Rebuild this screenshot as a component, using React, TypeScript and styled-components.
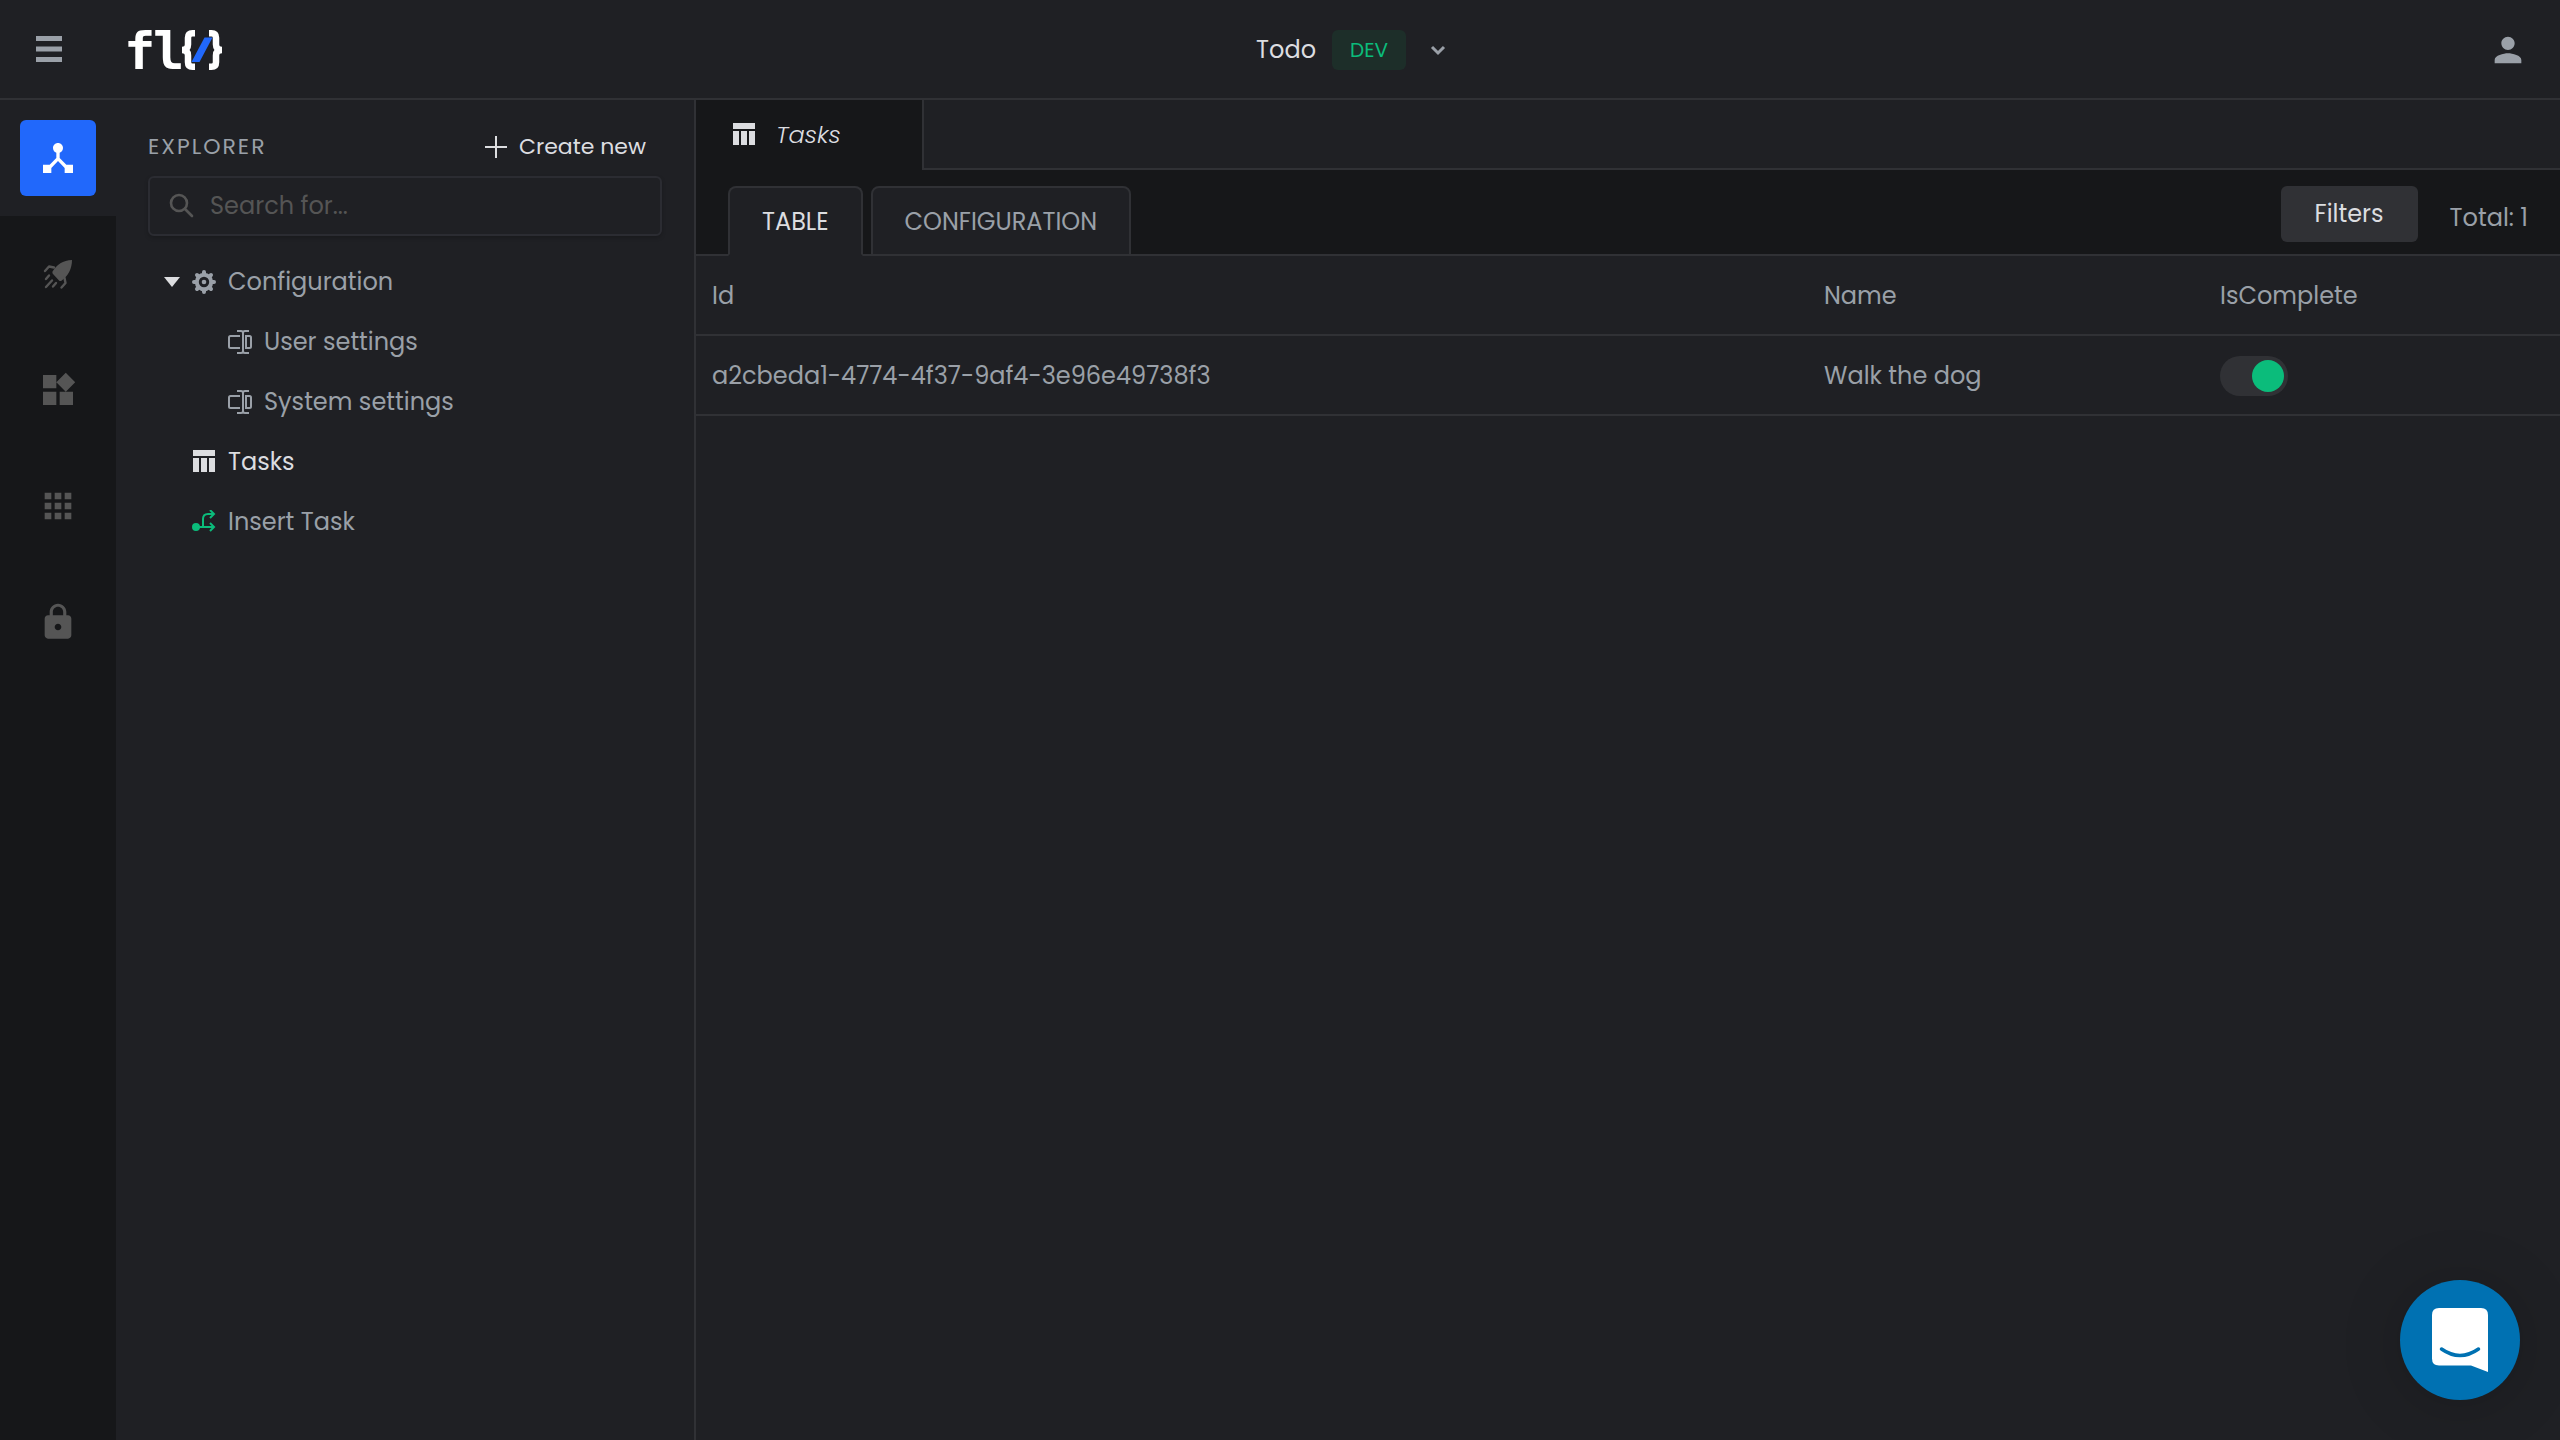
import React from 'react';
import styled, { createGlobalStyle } from 'styled-components';
import { MdDeviceHub, MdWidgets, MdApps, MdLock, MdPerson } from 'react-icons/md';

const color = {
  base: '#1f2024', deep: '#161719', line: '#303135', text: '#9aa0a8',
  bright: '#dcdde0', dim: '#555555', green: '#0bbc7b', blue: '#2168fb',
};

const GlobalStyle = createGlobalStyle`
  * { box-sizing: border-box; }
  body { margin: 0; background: ${color.base}; color: ${color.text}; font-family: Poppins, Inter, sans-serif; font-size: 24px; line-height: 36px; }
  button, input { font: inherit; color: inherit; }
  button { background: none; border: 0; padding: 0; cursor: pointer; }
  svg { display: block; flex: none; }
`;

const Page = styled.div`display: flex; flex-direction: column; min-height: 100vh;`;
const Header = styled.header`
  display: flex; align-items: center; justify-content: space-between;
  height: 100px; padding: 0 32px; box-shadow: inset 0 -2px 0 ${color.line};
`;
const Group = styled.div<{ $gap: number }>`display: flex; align-items: center; gap: ${p => p.$gap}px;`;
const IconButton = styled.button`display: flex; color: ${color.text};`;
const Project = styled.button`display: flex; align-items: center; gap: 16px; padding-right: 2px; color: ${color.bright};`;
const Badge = styled.span`
  padding: 0 18px; border-radius: 6px; background: #1d2e29; color: ${color.green};
  font-size: 20px; line-height: 40px;
`;

const Body = styled.div`display: flex; flex: 1;`;
const Rail = styled.nav`width: 116px; flex: none; background: ${color.deep};`;
const RailItem = styled.button<{ $active?: boolean }>`
  display: flex; width: 100%; padding: 20px; color: ${p => (p.$active ? '#fff' : color.dim)};
  background: ${p => (p.$active ? color.base : 'transparent')};
`;
const RailTile = styled.span<{ $active?: boolean }>`
  display: grid; place-items: center; width: 76px; height: 76px; border-radius: 6px;
  background: ${p => (p.$active ? color.blue : 'transparent')};
`;

const Explorer = styled.aside`width: 580px; flex: none; padding: 24px 32px; border-right: 2px solid ${color.line};`;
const ExplorerHead = styled.div`display: flex; align-items: center; justify-content: space-between; height: 46px; padding-right: 16px;`;
const Title = styled.h2`margin: 0; font-size: 22px; font-weight: 400; letter-spacing: 2px;`;
const CreateButton = styled.button`display: flex; align-items: center; gap: 12px; color: ${color.bright}; font-size: 22px;`;
const Search = styled.label`
  display: flex; align-items: center; gap: 12px; height: 60px; margin-top: 6px; padding: 0 16px;
  border: 2px solid #2b2c32; border-radius: 6px; color: ${color.dim}; box-shadow: 0 2px 4px rgba(0, 0, 0, 0.2);
`;
const SearchInput = styled.input`
  flex: 1; min-width: 0; padding: 0; border: 0; outline: 0; background: none;
  &::placeholder { color: ${color.dim}; opacity: 1; }
`;
const Tree = styled.ul`list-style: none; margin: 16px 0 0; padding: 0;`;
const TreeItem = styled.button<{ $depth: number; $active?: boolean }>`
  display: flex; align-items: center; gap: 12px; width: 100%; height: 60px;
  padding-left: ${p => 16 + p.$depth * 36}px; text-align: left;
  color: ${p => (p.$active ? color.bright : color.text)};
`;
const Arrow = styled.span`width: 16px; display: flex; color: ${color.bright};`;

const Main = styled.main`flex: 1; min-width: 0;`;
const FileTabs = styled.div`
  display: flex; height: 70px;
  &::after { content: ''; flex: 1; border-bottom: 2px solid ${color.line}; }
`;
const FileTab = styled.button`
  display: flex; align-items: center; gap: 20px; width: 228px; padding: 0 36px;
  background: ${color.deep}; border-right: 2px solid ${color.line};
  color: ${color.bright}; font-style: italic; font-weight: 300;
`;
const Toolbar = styled.div`
  display: flex; justify-content: space-between; align-items: flex-start;
  height: 86px; padding: 16px 32px 0; background: ${color.deep};
  box-shadow: inset 0 -2px 0 ${color.line};
`;
const Tabs = styled.div`display: flex; gap: 8px; height: 100%;`;
const Tab = styled.button<{ $active?: boolean }>`
  padding: 2px 32px 0; background: ${color.base}; border: 2px solid ${color.line};
  border-bottom-color: ${p => (p.$active ? color.base : color.line)};
  border-radius: 8px 8px 0 0; color: ${p => (p.$active ? color.bright : color.text)};
`;
const Filters = styled.button`height: 56px; padding: 0 34px; border-radius: 6px; background: #303135; color: ${color.bright};`;
const Total = styled.span`padding-top: 8px; line-height: 48px;`;

const Table = styled.table`width: 100%; border-collapse: separate; border-spacing: 0; table-layout: fixed;`;
const Col = styled.col<{ $width?: number }>`width: ${p => (p.$width ? p.$width + 'px' : 'auto')};`;
const Cell = styled.td`height: 80px; padding: 2px 16px 0; border-bottom: 2px solid ${color.line}; text-align: left; font-weight: 400;`;
const Toggle = styled.input`
  appearance: none; display: flex; width: 68px; height: 40px; margin: 0; padding: 4px;
  border-radius: 20px; background: #303135;
  &::before { content: ''; width: 32px; height: 32px; border-radius: 50%; background: ${color.text}; }
  &:checked { justify-content: flex-end; }
  &:checked::before { background: ${color.green}; }
`;

const Chat = styled.button`
  position: fixed; right: 40px; bottom: 40px; display: grid; place-items: center;
  width: 120px; height: 120px; border-radius: 50%; background: #0071b2;
  box-shadow: 0 2px 12px rgba(0, 0, 0, 0.06), 0 4px 64px rgba(0, 0, 0, 0.16);
`;

const MenuIcon = () => (
  <svg width="32" height="32" viewBox="0 0 32 32" fill="currentColor"><path d="M4 2h26v5H4zM4 12.5h26v5H4zM4 23h26v5H4z" /></svg>
);
const Logo = () => (
  <svg width="112" height="64" viewBox="0 0 112 64" fill="none" role="img" aria-label="flo">
    <g fill="#fff" fontFamily="DejaVu Sans Mono" fontSize="52" fontWeight="700">
      <text x="12" y="51">f</text>
      <text x="41" y="51">l</text>
    </g>
    <g stroke="#fff" strokeWidth="6.5">
      <path d="M83 15.3h-2.5q-4.5 0-4.5 4.5v6.7q0 5.5-6 5.5q6 0 6 5.5v6.7q0 4.5 4.5 4.5H83" />
      <path d="M97 15.3h2.5q4.5 0 4.5 4.5v6.7q0 5.5 6 5.5q-6 0-6 5.5v6.7q0 4.5-4.5 4.5H97" />
    </g>
    <path d="M92.5 19.5h8L87.5 44h-8z" fill={color.blue} />
  </svg>
);
const Chevron = () => (
  <svg width="32" height="40" viewBox="0 0 32 40" fill="none" stroke={color.text} strokeWidth="3"><path d="M10 17l6 6 6-6" /></svg>
);
const Plus = () => (
  <svg width="22" height="22" viewBox="0 0 22 22" stroke="currentColor" strokeWidth="2"><path d="M11 0v22M0 11h22" /></svg>
);
const SearchIcon = () => (
  <svg width="32" height="32" viewBox="0 0 32 32" fill="none" stroke="currentColor" strokeWidth="2.6" strokeLinecap="round">
    <circle cx="13" cy="13" r="8" /><path d="M19 19l7 7" />
  </svg>
);
const RocketIcon = () => (
  <svg width="40" height="40" viewBox="0 0 40 40" fill="none" stroke="currentColor" strokeWidth="2.4" strokeLinecap="round" strokeLinejoin="round">
    <path d="M34 6C25 6 18.5 11 14.5 17.5q-.5 1.5.5 2.5l6 6.5q1 1 2.5.2C30 22 34 15 34 6z" fill="currentColor" stroke="none" />
    <path d="M16 13.5l-5-1-4 4.5M26.5 24l1 5-4 4.5M8 25l3-3.500M8 33l6-6.500M15 32.500l3-3.500" />
  </svg>
);
const GearIcon = () => (
  <svg width="24" height="24" viewBox="0 0 24 24" fill="none" stroke="currentColor" strokeWidth="4" strokeLinecap="round">
    <circle cx="12" cy="12" r="7.2" />
    <path d="M12 2v2M12 20v2M2 12h2M20 12h2M5 5l1 1M18 18l1 1M5 19l1-1M18 6l1-1" />
    <circle cx="12" cy="12" r="2.3" fill="currentColor" stroke="none" />
  </svg>
);
const FieldIcon = () => (
  <svg width="24" height="24" viewBox="0 0 24 24" fill="none" stroke="currentColor" strokeWidth="2">
    <path d="M12 6H2.5Q1 6 1 7.5v9Q1 18 2.5 18H12M18 6h3.5Q23 6 23 7.5v9q0 1.5-1.5 1.5H18zM9 1h4q2 0 2 2v18q0 2-2 2H9M21 1h-4q-2 0-2 2v18q0 2 2 2h4" />
  </svg>
);
const TableIcon = () => (
  <svg width="24" height="24" viewBox="0 0 24 24" fill="currentColor"><path d="M1 0h22v6H1zM1 8h6v14H1zM9 8h6v14H9zM17 8h6v14h-6z" /></svg>
);
const FlowIcon = () => (
  <svg width="24" height="24" viewBox="0 0 24 24" fill="none" stroke={color.green} strokeWidth="2">
    <circle cx="4" cy="17" r="3" fill={color.green} /><path d="M4 17h18M18 13l4 4-4 4M11 17V9q0-5 5-5h6M18 0l4 4-4 4" />
  </svg>
);
const ChatIcon = () => (
  <svg width="56" height="64" viewBox="0 0 56 64"><path d="M7 0h42q7 0 7 7v57l-17-6.5H7q-7 0-7-7V7q0-7 7-7z" fill="#fff" /><path d="M9.5 41q18.5 13 37 0" fill="none" stroke="#0071b2" strokeWidth="3.5" strokeLinecap="round" /></svg>
);

const railItems = [
  { label: 'Apps', icon: <MdDeviceHub size={40} />, active: true },
  { label: 'Deploy', icon: <RocketIcon /> },
  { label: 'Widgets', icon: <MdWidgets size={40} /> },
  { label: 'Modules', icon: <MdApps size={40} /> },
  { label: 'Security', icon: <MdLock size={40} /> },
];

const treeItems = [
  { label: 'Configuration', icon: <GearIcon />, depth: 0, open: true },
  { label: 'User settings', icon: <FieldIcon />, depth: 1 },
  { label: 'System settings', icon: <FieldIcon />, depth: 1 },
  { label: 'Tasks', icon: <TableIcon />, depth: 0, active: true },
  { label: 'Insert Task', icon: <FlowIcon />, depth: 0 },
];

export default function App() {
  return (
    <>
      <GlobalStyle />
      <Page>
        <Header>
          <Group $gap={48}>
            <IconButton aria-label="Menu"><MenuIcon /></IconButton>
            <Logo />
          </Group>
          <Project>Todo <Badge>DEV</Badge><Chevron /></Project>
          <IconButton aria-label="Account"><MdPerson size={40} /></IconButton>
        </Header>
        <Body>
          <Rail>
            {railItems.map(({ label, icon, active }) => (
              <RailItem key={label} $active={active} aria-label={label}><RailTile $active={active}>{icon}</RailTile></RailItem>
            ))}
          </Rail>
          <Explorer>
            <ExplorerHead>
              <Title>EXPLORER</Title>
              <CreateButton><Plus />Create new</CreateButton>
            </ExplorerHead>
            <Search><SearchIcon /><SearchInput placeholder="Search for..." aria-label="Search" /></Search>
            <Tree>
              {treeItems.map(({ label, icon, depth, open, active }) => (
                <li key={label}>
                  <TreeItem $depth={depth} $active={active}>
                    <Arrow>{open && <svg width="16" height="10" fill="currentColor"><path d="M0 0h16L8 10z" /></svg>}</Arrow>
                    {icon}{label}
                  </TreeItem>
                </li>
              ))}
            </Tree>
          </Explorer>
          <Main>
            <FileTabs><FileTab><TableIcon />Tasks</FileTab></FileTabs>
            <Toolbar>
              <Tabs><Tab $active>TABLE</Tab><Tab>CONFIGURATION</Tab></Tabs>
              <Group $gap={32}><Filters>Filters</Filters><Total>Total: 1</Total></Group>
            </Toolbar>
            <Table>
              <colgroup><Col /><Col $width={396} /><Col $width={356} /></colgroup>
              <thead><tr><Cell as="th">Id</Cell><Cell as="th">Name</Cell><Cell as="th">IsComplete</Cell></tr></thead>
              <tbody><tr><Cell>a2cbeda1-4774-4f37-9af4-3e96e49738f3</Cell><Cell>Walk the dog</Cell><Cell><Toggle type="checkbox" defaultChecked aria-label="IsComplete" /></Cell></tr></tbody>
            </Table>
          </Main>
        </Body>
        <Chat aria-label="Open chat"><ChatIcon /></Chat>
      </Page>
    </>
  );
}
